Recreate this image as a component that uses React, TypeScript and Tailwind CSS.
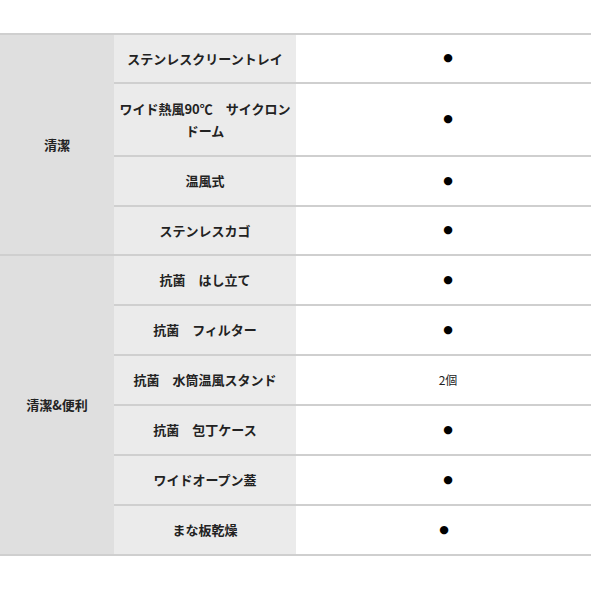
const GROUPS = [
  {
    label: "清潔",
    rows: [
      { name: "ステンレスクリーントレイ", value: "●", h: "h-[49px]", shift: "pl-[9px]" },
      { name: "ワイド熱風90℃　サイクロン\nドーム", value: "●", h: "h-[73px]", shift: "pl-[9px]" },
      { name: "温風式", value: "●", h: "h-[50px]", shift: "pl-[9px]" },
      { name: "ステンレスカゴ", value: "●", h: "h-[47px]", shift: "pl-[9px]" },
    ],
  },
  {
    label: "清潔&便利",
    rows: [
      { name: "抗菌　はし立て", value: "●", h: "h-[50px]", shift: "pl-[9px]" },
      { name: "抗菌　フィルター", value: "●", h: "h-[50px]", shift: "pl-[9px]" },
      { name: "抗菌　水筒温風スタンド", value: "2個", h: "h-[50px]", shift: "pl-[9px]" },
      { name: "抗菌　包丁ケース", value: "●", h: "h-[50px]", shift: "pl-[9px]" },
      { name: "ワイドオープン蓋", value: "●", h: "h-[50px]", shift: "pl-[9px]" },
      { name: "まな板乾燥", value: "●", h: "h-[48px]", shift: "pl-[1px]" },
    ],
  },
];

export default function App() {
  return (
    <div
      className="w-[591px] h-[591px] bg-white pt-[33px] text-[#222]"
      style={{ fontFamily: '"Noto Sans CJK JP", "Liberation Sans", sans-serif' }}
    >
      <div className="border-t-2 border-[#cfcfcf]">
        {GROUPS.map((g) => (
          <div key={g.label} className="flex border-b-2 border-[#cfcfcf]">
            <div className="w-[114px] shrink-0 bg-[#dfdfdf] flex items-center justify-center text-[13px] font-bold">
              {g.label}
            </div>
            <div className="flex-1 flex flex-col">
              {g.rows.map((r, i) => (
                <div
                  key={r.name}
                  className={`flex shrink-0 ${r.h} ${i < g.rows.length - 1 ? "border-b-2 border-[#cfcfcf]" : ""}`}
                >
                  <div className="w-[182px] shrink-0 bg-[#ebebeb] flex items-center justify-center px-1 text-center text-[13px] font-bold leading-[22px] whitespace-pre-line">
                    {r.name}
                  </div>
                  <div className={`flex-1 flex items-center justify-center ${r.shift}`}>
                    {r.value === "●" ? (
                      <span className="text-[11px] text-black" style={{ fontFamily: '"DejaVu Sans", sans-serif' }}>●</span>
                    ) : (
                      <span className="text-[12px]">{r.value}</span>
                    )}
                  </div>
                </div>
              ))}
            </div>
          </div>
        ))}
      </div>
    </div>
  );
}
